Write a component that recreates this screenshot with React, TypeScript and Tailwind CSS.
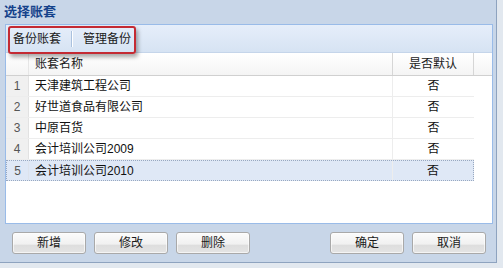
import React from "react";

const rows = [
  { n: 1, name: "天津建筑工程公司", def: "否" },
  { n: 2, name: "好世道食品有限公司", def: "否" },
  { n: 3, name: "中原百货", def: "否" },
  { n: 4, name: "会计培训公司2009", def: "否" },
  { n: 5, name: "会计培训公司2010", def: "否" },
];

function Btn({ label }: { label: string }) {
  return (
    <div className="w-[74px] h-[22px] rounded-[3px] border border-[#a9a9a9] bg-[linear-gradient(to_bottom,#fbfbfb_0%,#f1f1f1_55%,#dedede_62%,#e4e4e4_100%)] flex items-center justify-center text-[12px] text-[#1a1a1a] shadow-[0_0_0_1px_rgba(255,255,255,0.6)_inset]">
      {label}
    </div>
  );
}

export default function App() {
  return (
    <div
      className="w-[503px] h-[268px] bg-[#e2e8ef] overflow-hidden"
      style={{ fontFamily: '"Liberation Sans", "Noto Sans CJK SC", sans-serif' }}
    >
      <div className="w-[497px] h-[263px] bg-[#c8d6e8] border-r border-b border-[#8ea3bf] flex flex-col">
        <div className="h-[24px] pl-[4px] flex items-center text-[13px] font-bold text-[#15428b]">
          选择账套
        </div>
        <div className="ml-[5px] w-[488px] h-[200px] border border-[#99bbe8] bg-white flex flex-col">
          <div className="relative h-[28px] border-b border-[#c5d5ea] bg-[linear-gradient(to_bottom,#e6eefa,#d6e3f3)] flex items-center pl-[7px] text-[12px] text-[#1a1a1a]">
            <span>备份账套</span>
            <span className="mx-[10px] w-px h-[16px] bg-[#aac1de] border-r border-white box-content"></span>
            <span>管理备份</span>
            <div className="absolute left-[2px] top-[1px] w-[128px] h-[28px] border-2 border-[#c42a33] rounded-[3px] shadow-[2px_3px_4px_rgba(0,0,0,0.35)]"></div>
          </div>
          <div className="h-[23px] flex border-b border-[#d0d0d0] bg-[linear-gradient(to_bottom,#ffffff,#f4f4f4)] text-[12px] text-[#1a1a1a]">
            <div className="w-[23px] border-r border-[#e6e6e6]"></div>
            <div className="w-[364px] border-r border-[#d6d6d6] flex items-center pl-[6px]">账套名称</div>
            <div className="w-[81px] border-r border-[#d6d6d6] flex items-center justify-center">是否默认</div>
            <div className="flex-1"></div>
          </div>
          {rows.map((r) => {
            const sel = r.n === 5;
            return (
              <div
                key={r.n}
                className={
                  sel
                    ? "h-[21px] w-[468px] flex bg-[#dfe8f6] border border-dotted border-[#98a8c0] text-[12px] text-[#111]"
                    : "h-[21px] w-[468px] flex border-b border-[#ededed] text-[12px] text-[#111]"
                }
              >
                <div
                  className={
                    sel
                      ? "w-[22px] flex items-center justify-center text-[#555] border-r border-[#dde3ec]"
                      : "w-[23px] flex items-center justify-center text-[#555] bg-[#f0f0f0] border-r border-[#e2e2e2]"
                  }
                >
                  {r.n}
                </div>
                <div className="w-[364px] flex items-center pl-[6px] border-r border-[#ededed]">{r.name}</div>
                <div className="flex-1 flex items-center justify-center">{r.def}</div>
              </div>
            );
          })}
        </div>
        <div className="mt-[8px] flex">
          <div className="ml-[12px] flex gap-[8px]">
            <Btn label="新增" />
            <Btn label="修改" />
            <Btn label="删除" />
          </div>
          <div className="ml-[80px] flex gap-[8px]">
            <Btn label="确定" />
            <Btn label="取消" />
          </div>
        </div>
      </div>
    </div>
  );
}
